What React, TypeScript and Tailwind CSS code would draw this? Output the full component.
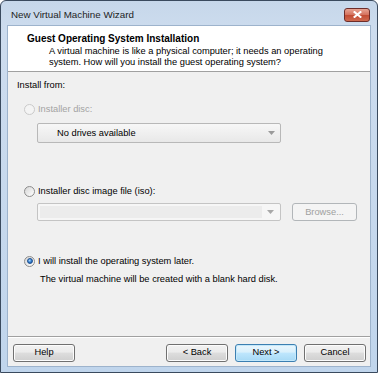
import React from 'react';

// ----------------------------------------------------------------------------
// Small Win7-style controls
// ----------------------------------------------------------------------------

function Radio({ checked = false, disabled = false }: { checked?: boolean; disabled?: boolean }) {
  return (
    <span
      className={`flex h-[11px] w-[11px] shrink-0 items-center justify-center rounded-full border ${
        disabled
          ? 'border-[#cacaca] bg-[#f4f4f4]'
          : 'border-[#8c8c8c] bg-[linear-gradient(135deg,#d6d6d6,#ffffff)]'
      }`}
    >
      {checked && (
        <span className="h-[6px] w-[6px] rounded-full border border-[#1d4f8e] bg-[radial-gradient(circle_at_40%_35%,#a6d8ff_0%,#2f78c9_55%,#1b4f95_100%)]" />
      )}
    </span>
  );
}

function Arrow({ color = '#8a8a8a' }: { color?: string }) {
  return (
    <svg width="7" height="4" viewBox="0 0 7 4" className="shrink-0">
      <path d="M0 0h7L3.5 4z" fill={color} />
    </svg>
  );
}

function WinButton({ label, primary = false }: { label: string; primary?: boolean }) {
  return (
    <button
      className={`flex h-[18px] w-[62px] items-center justify-center rounded-[3px] border text-[9.3px] leading-none text-black ${
        primary
          ? 'border-[#3c7fb1] bg-[linear-gradient(#eaf6fd_0%,#d9f0fc_45%,#bee6fd_50%,#a7d9f5_100%)] shadow-[inset_0_0_0_1px_#c4e8fa]'
          : 'border-[#707070] bg-[linear-gradient(#f2f2f2_0%,#ebebeb_45%,#dddddd_50%,#cfcfcf_100%)] shadow-[inset_0_0_0_1px_#fcfcfc]'
      }`}
    >
      {label}
    </button>
  );
}

// ----------------------------------------------------------------------------
// Wizard
// ----------------------------------------------------------------------------

export default function App() {
  return (
    <div className="h-[373px] w-[378px] bg-white font-['Liberation_Sans',Arial,sans-serif] text-[9.3px] leading-[12px] text-black">
      <div className="flex h-full w-full flex-col rounded-t-[6px] border border-[#3a4a5e] bg-[linear-gradient(#c6d7ea_0%,#cddcee_30px,#c0d5ec_100%)]">
        {/* Title bar */}
        <div className="flex h-[24px] shrink-0 items-center justify-between pl-[10px] pr-[7px]">
          <span className="mt-[4px] text-[9.8px] text-[#1e1e1e]">New Virtual Machine Wizard</span>
          <span className="mt-[3px] flex h-[14px] w-[26px] items-center justify-center rounded-[3px] border border-[#6d2d2a] bg-[linear-gradient(#e8a493_0%,#d4705c_50%,#c24b33_51%,#cf6a50_100%)]">
            <svg width="9" height="7" viewBox="0 0 9 7">
              <path d="M1.5 1l6 5M7.5 1l-6 5" stroke="#ffffff" strokeWidth="2" strokeLinecap="square" />
            </svg>
          </span>
        </div>

        {/* Client area */}
        <div className="mx-[6px] mb-[5px] flex flex-1 flex-col border border-[#9db3cc] bg-[#f0f0f0]">
          {/* Header */}
          <div className="flex h-[46px] shrink-0 flex-col border-b border-[#a0a0a0] bg-white pl-[19px] pt-[6px]">
            <span className="text-[10px] font-bold leading-[13px]">Guest Operating System Installation</span>
            <p className="mt-[1px] pl-[22px] leading-[11px]">
              A virtual machine is like a physical computer; it needs an operating
              <br />
              system. How will you install the guest operating system?
            </p>
          </div>

          {/* Body */}
          <div className="flex flex-1 flex-col pl-[9px] pt-[7px]">
            <span>Install from:</span>

            <div className="mt-[12px] flex items-center gap-[3px] pl-[7px] text-[#a3a3a3]">
              <Radio disabled />
              <span>Installer disc:</span>
            </div>
            <div className="ml-[20px] mt-[8px] flex h-[20px] w-[244px] items-center justify-between rounded-[2px] border border-[#b8b8b8] bg-[linear-gradient(#f7f7f7,#e8e8e8)] pl-[19px] pr-[5px]">
              <span>No drives available</span>
              <Arrow color="#9a9a9a" />
            </div>

            <div className="mt-[42px] flex items-center gap-[3px] pl-[7px]">
              <Radio />
              <span>Installer disc image file (iso):</span>
            </div>
            <div className="mt-[6px] flex items-center gap-[11px] pl-[20px]">
              <div className="flex h-[18px] w-[244px] items-center rounded-[2px] border border-[#c4c4c4] bg-[#f6f6f6] p-[2px]">
                <span className="h-full flex-1 bg-[#ececec]" />
                <span className="flex w-[16px] justify-center">
                  <Arrow color="#a8a8a8" />
                </span>
              </div>
              <span className="flex h-[18px] w-[65px] items-center justify-center rounded-[3px] border border-[#b2b6b9] bg-[#f4f4f4] text-[#a0a0a0]">
                Browse...
              </span>
            </div>

            <div className="mt-[34px] flex items-center gap-[3px] pl-[7px]">
              <Radio checked />
              <span>I will install the operating system later.</span>
            </div>
            <span className="mt-[6px] pl-[23px]">The virtual machine will be created with a blank hard disk.</span>
          </div>

          {/* Footer */}
          <div className="flex h-[30px] shrink-0 items-start justify-between border-t border-[#a0a0a0] pl-[5px] pr-[4px] pt-[7px] shadow-[inset_0_1px_0_#ffffff]">
            <WinButton label="Help" />
            <div className="flex gap-[7px]">
              <WinButton label="< Back" />
              <WinButton label="Next >" primary />
              <WinButton label="Cancel" />
            </div>
          </div>
        </div>
      </div>
    </div>
  );
}
